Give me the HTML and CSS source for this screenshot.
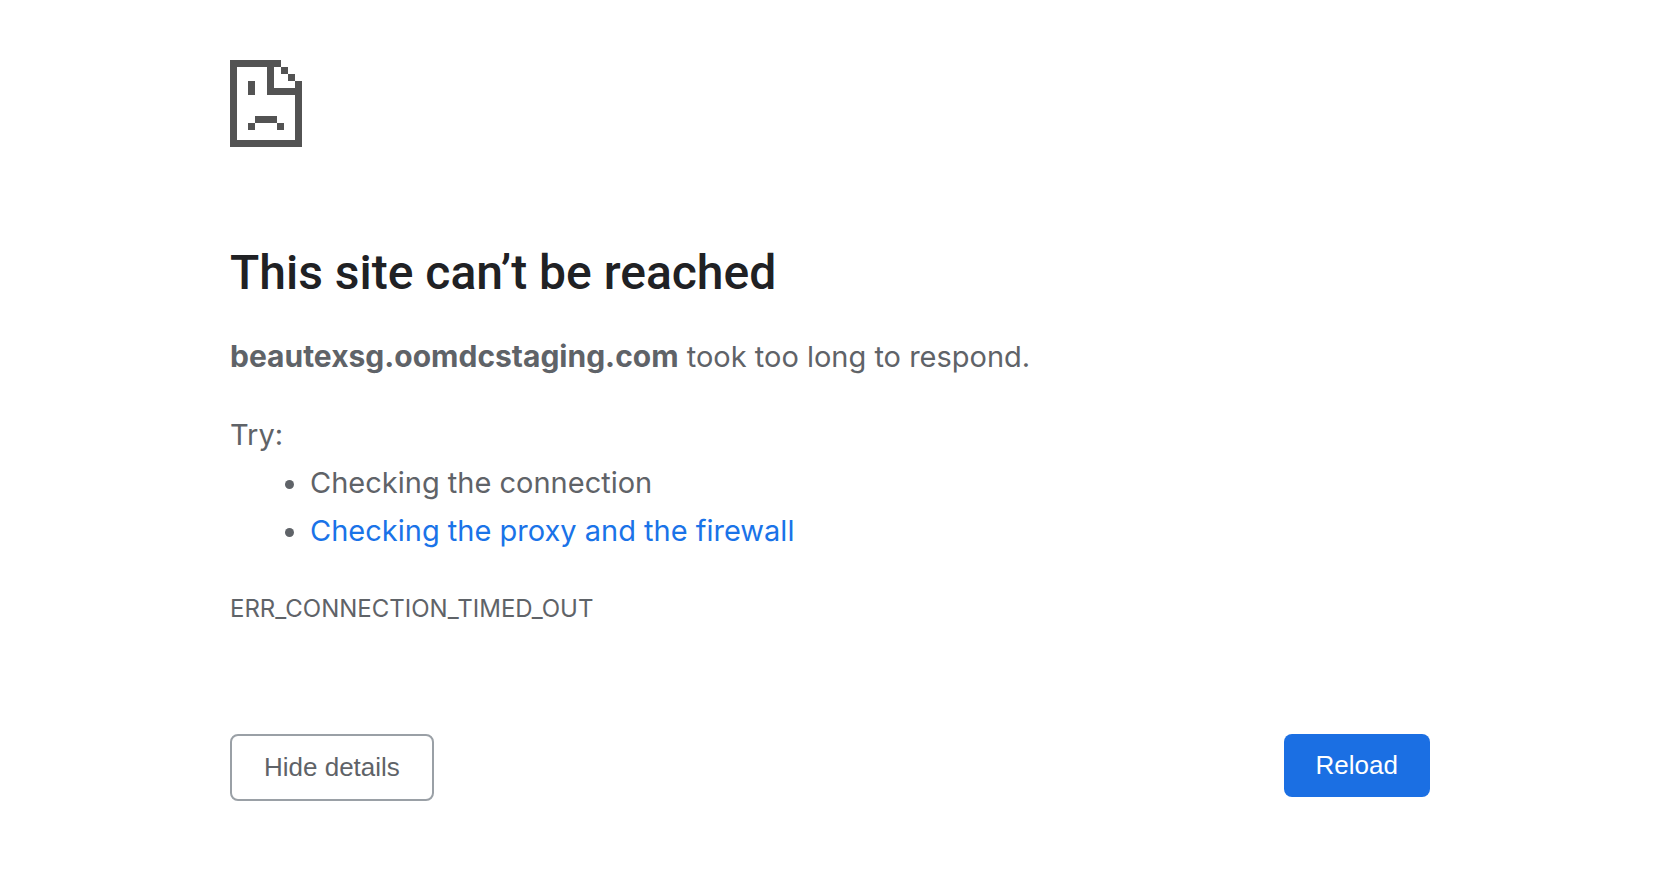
FILE: index.html
```html
<!DOCTYPE html>
<html lang="en">
<head>
<meta charset="utf-8">
<title>beautexsg.oomdcstaging.com</title>
<link rel="stylesheet" href="styles.css">
</head>
<body>
<main class="page">
  <svg class="icon" viewBox="0 0 72 87" shape-rendering="crispEdges" aria-hidden="true">
    <path fill="#535353" d="M0 0H51V7H44V28H65V21H72V87H0ZM7 7V80H65V35H37V7Z" fill-rule="evenodd"/>
    <path fill="#535353" d="M51 7H58V14H51ZM58 14H65V21H58ZM18 21H25V35H18ZM25 56H47V63H25ZM18 63H25V70H18ZM47 63H54V70H47Z"/>
  </svg>
  <h1 class="title">This site can’t be reached</h1>
  <p class="summary"><strong class="host">beautexsg.oomdcstaging.com</strong> took too long to respond.</p>
  <div class="suggestions">
    <p class="try">Try:</p>
    <ul class="list">
      <li>Checking the connection</li>
      <li><a class="link" href="#buttons">Checking the proxy and the firewall</a></li>
    </ul>
  </div>
  <p class="code">ERR_CONNECTION_TIMED_OUT</p>
  <div class="buttons" id="buttons">
    <button class="button secondary" type="button">Hide details</button>
    <button class="button primary" type="button">Reload</button>
  </div>
</main>
</body>
</html>
```
FILE: styles.css
```css
body {
  margin: 0;
  padding-left: 6px;
  background: #fff;
  color: #5f6368;
  font: 29px/48px Inter, "Liberation Sans", sans-serif;
}
.page {
  box-sizing: border-box;
  max-width: 1200px;
  margin: 0 auto;
  padding-top: 60px;
}
.icon {
  display: block;
  width: 72px;
  height: 87px;
}
.title {
  margin: 98px 0 31px;
  color: #202124;
  font-family: Roboto, Inter, sans-serif;
  font-size: 48px;
  font-weight: 500;
  line-height: 56px;
}
.summary,
.try {
  margin: 0;
}
.host {
  font-size: 30px;
}
.suggestions {
  margin-top: 30px;
}
.list {
  margin: 0;
  padding-left: 80px;
}
.link {
  color: #1a73e8;
  text-decoration: none;
}
.code {
  margin: 30px 0 0;
  font-size: 24px;
}
.buttons {
  display: flex;
  flex-wrap: wrap;
  justify-content: space-between;
  align-items: flex-start;
  margin-top: 101px;
}
.button {
  padding: 16px 32px;
  border: 0;
  border-radius: 8px;
  font: 26px/31px "Liberation Sans", Arial, sans-serif;
}
.secondary {
  border: 2px solid #9aa0a6;
  background: #fff;
  color: #5f6368;
}
.primary {
  background: #1b6fe3;
  color: #fff;
}
```
